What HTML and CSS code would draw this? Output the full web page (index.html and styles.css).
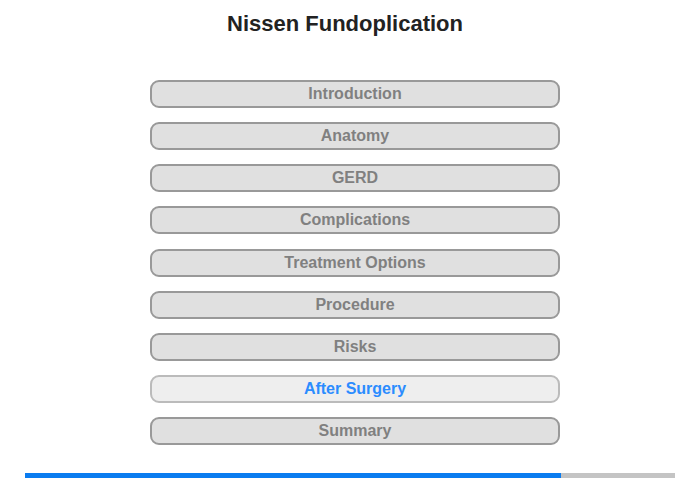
FILE: index.html
```html
<!DOCTYPE html>
<html lang="en">
<head>
    <meta charset="UTF-8">
    <meta name="viewport" content="width=device-width, initial-scale=1.0">
    <title>Nissen Fundoplication</title>
    <link rel="stylesheet" href="styles.css">
</head>
<body>
    <h1 class="title">Nissen Fundoplication</h1>

    <div class="menu">
        <button class="menu-item">Introduction</button>
        <button class="menu-item">Anatomy</button>
        <button class="menu-item">GERD</button>
        <button class="menu-item">Complications</button>
        <button class="menu-item">Treatment Options</button>
        <button class="menu-item">Procedure</button>
        <button class="menu-item">Risks</button>
        <button class="menu-item active">After Surgery</button>
        <button class="menu-item">Summary</button>
    </div>

    <div class="progress">
        <div class="progress-fill" style="width: 82.5%"></div>
    </div>
</body>
</html>
```

FILE: styles.css
```css
body {
    margin: 0;
    font-family: "Liberation Sans", Arial, sans-serif;
    background-color: #fff;
}
.title {
    width: 690px;
    margin: 0;
    padding-top: 11px;
    height: 80px;
    box-sizing: border-box;
    text-align: center;
    font-size: 22px;
    line-height: 26px;
    color: #222;
}
.menu {
    width: 410px;
    margin-left: 150px;
    display: flex;
    flex-direction: column;
    gap: 14.125px;
}
.menu-item {
    height: 28px;
    padding: 0;
    background-color: #e0e0e0;
    border: 2px solid #999;
    border-radius: 9px;
    font-family: "Liberation Sans", Arial, sans-serif;
    font-size: 16px;
    font-weight: bold;
    color: #808080;
    cursor: pointer;
}
.menu-item.active {
    background-color: #eee;
    border-color: #bbb;
    color: #2b8cff;
}
.progress {
    margin: 28px 25px 0;
    height: 5px;
    background-color: #c4c4c4;
}
.progress-fill {
    height: 100%;
    background-color: #0a7cf0;
}
```
